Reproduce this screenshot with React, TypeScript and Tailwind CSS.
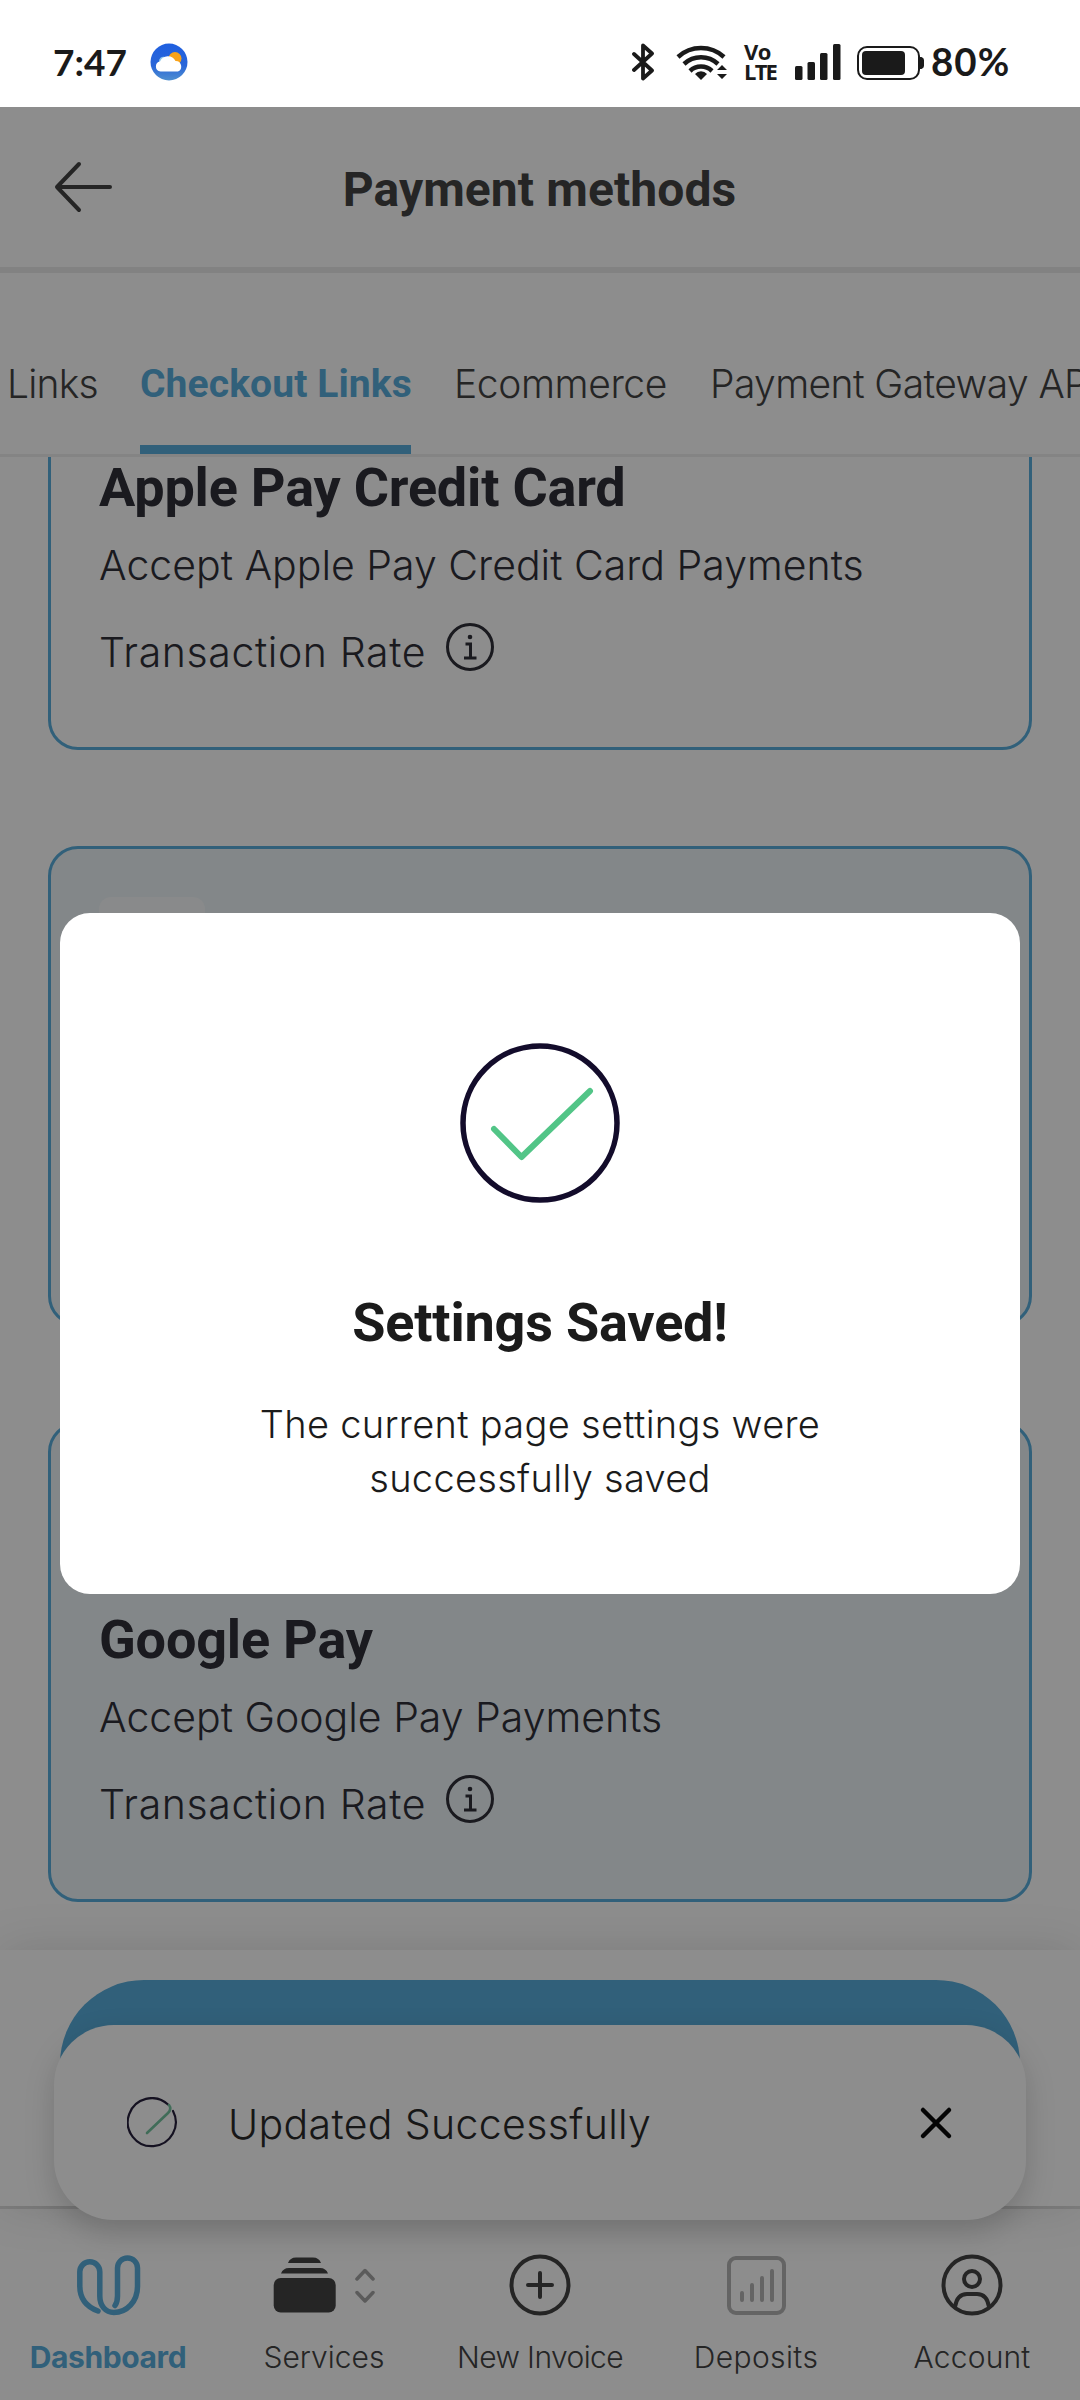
import clsx from 'clsx';

const tabs = [
  { label: 'Links', style: 'w-[90px] tracking-[-0.8px]' },
  { label: 'Checkout Links', style: 'w-[271px] tracking-[0.1px]', active: true },
  { label: 'Ecommerce', style: 'w-[213px] tracking-[-0.4px]' },
  { label: 'Payment Gateway API', style: 'w-[420px] tracking-[-0.6px]' },
];

const methods = [
  {
    name: 'Apple Pay Credit Card',
    description: 'Accept Apple Pay Credit Card Payments',
    filled: false,
  },
  { name: 'Credit Card', description: 'Accept Credit Card Payments', filled: true },
  { name: 'Google Pay', description: 'Accept Google Pay Payments', filled: true },
];

function WeatherIcon() {
  return (
    <svg width="38" height="38" viewBox="0 0 38 38">
      <defs>
        <linearGradient id="sky" x1="0" y1="0" x2="0" y2="1">
          <stop offset="0" stopColor="#1f5fe0" />
          <stop offset="0.6" stopColor="#2a66d8" />
          <stop offset="1" stopColor="#4f8fd0" />
        </linearGradient>
      </defs>
      <circle cx="19" cy="19" r="18.5" fill="url(#sky)" />
      <circle cx="25" cy="15.500" r="6.500" fill="#f9a31a" />
      <path d="M9 19a4.500 4.500 0 0 1 6-5l2 4-5 3z" fill="#8fc7ea" />
      <path d="M10.500 28.500a5 5 0 0 1-.5-9.900a8.500 8.500 0 0 1 15.500-.6a5.500 5.500 0 0 1 2.500 10.500z" fill="#fff" />
    </svg>
  );
}

function StatusBar() {
  return (
    <div className="flex h-[107px] items-center bg-white px-[53px] pt-[17px] font-['Lato','Noto_Sans',sans-serif] text-[#1a1a1a]">
      <span className="w-[97px] pb-0.5 text-[37px] leading-none font-bold">7:47</span>
      <WeatherIcon />
      <svg className="ml-auto" width="96" height="40" viewBox="632 42 96 40" fill="none" stroke="#1a1a1a">
        <path d="M634 54l18 16.500-9 8V45.500l9 8-18 16.500" strokeWidth="3.800" strokeLinejoin="round" strokeLinecap="round" />
        <g strokeWidth="4.500">
          <path d="M678 57a34 34 0 0 1 46 0" />
          <path d="M684 64a25 25 0 0 1 34 0" />
          <path d="M690 71a16 16 0 0 1 22 0" />
        </g>
        <g fill="#1a1a1a" stroke="none">
          <path d="M701 80l-6-6a8 8 0 0 1 12 0z" />
          <path d="M722 65l5 5h-10zM722 79l5-5h-10z" />
        </g>
      </svg>
      <div className="ml-4 flex w-[50px] flex-col pb-0.5 font-['Open_Sans',sans-serif] text-[22px] leading-5 font-bold">
        <span className="tracking-[-0.5px]">Vo</span>
        <span className="tracking-[-1.8px]">LTE</span>
      </div>
      <svg width="130" height="40" viewBox="794 42 130 40" fill="none" stroke="#1a1a1a">
        <g fill="#1a1a1a" stroke="none">
          <rect x="795" y="66" width="7.500" height="14" rx="1.500" />
          <rect x="807.500" y="62" width="7.500" height="18" rx="1.500" />
          <rect x="820" y="53" width="7.500" height="27" rx="1.500" />
          <rect x="833" y="44" width="7.500" height="36" rx="1.500" />
          <rect x="862" y="51" width="43" height="24" rx="4" />
          <path d="M920 57h1.500q2.500 1 2.500 3v6q0 2-2.500 3H920z" />
        </g>
        <rect x="858" y="47" width="61" height="32" rx="9" strokeWidth="2" />
      </svg>
      <span className="ml-[7px] w-[96px] pb-0.5 text-[38.5px] leading-none font-bold tracking-[1px]">80%</span>
    </div>
  );
}

function Header() {
  return (
    <header className="flex h-[166px] items-center border-b-6 border-[#ebebeb] px-[54px]">
      <svg width="60" height="52" viewBox="0 0 60 52" fill="none" stroke="#444" strokeWidth="4" strokeLinecap="round" strokeLinejoin="round">
        <path d="M25 3L3 26l22 23M3 26h53" />
      </svg>
      <h1 className="flex-1 pt-1.5 pr-[61px] text-center font-['Roboto',sans-serif] text-[48px] leading-none font-bold tracking-[0.1px] whitespace-nowrap text-[#444]">
        Payment methods
      </h1>
    </header>
  );
}

function Tabs() {
  return (
    <nav className="flex h-[184px] items-end gap-[43px] overflow-hidden border-b-3 border-[#eee] pl-[7px]">
      {tabs.map((tab) => (
        <div
          key={tab.label}
          className={clsx(
            'h-[95px] shrink-0 text-[39px] whitespace-nowrap',
            tab.style,
            tab.active
              ? "border-b-9 border-[#59aedc] font-['Roboto',sans-serif] leading-[51px] font-bold text-[#59aedc]"
              : 'leading-[49px] font-light text-[#444]'
          )}
        >
          {tab.label}
        </div>
      ))}
    </nav>
  );
}

function InfoIcon() {
  return (
    <svg width="50" height="50" viewBox="0 0 50 50" fill="none" stroke="currentColor" strokeWidth="3">
      <circle cx="25" cy="25" r="22.500" />
      <path d="M20.500 22h5v13.500M19 36h12.500" />
      <circle cx="25" cy="15" r="2.300" fill="currentColor" stroke="none" />
    </svg>
  );
}

function MethodCard({ name, description, filled }: (typeof methods)[number]) {
  return (
    <article
      className={clsx(
        'h-[480px] shrink-0 rounded-[30px] border-3 border-[#59aedc] p-12 text-[#2f2f38]',
        filled ? 'bg-[#edf4f8]' : 'bg-white'
      )}
    >
      <div className="h-[72px] w-[106px] rounded-xl bg-[#f7fafb]" />
      <h2 className="mt-[65px] font-['Roboto',sans-serif] text-[54px] leading-[60px] font-bold tracking-[-0.2px]">{name}</h2>
      <p className="mt-[20px] text-[41px] leading-[54px] font-light whitespace-nowrap">{description}</p>
      <div className="mt-[30px] flex items-end gap-5">
        <span className="w-[326px] text-[41px] leading-[54px] font-light tracking-[0.6px] whitespace-nowrap">Transaction Rate</span>
        <span className="pb-[7px]">
          <InfoIcon />
        </span>
      </div>
    </article>
  );
}

function Toast() {
  return (
    <div className="absolute top-[75px] right-[54px] left-[54px] z-10 flex h-[195px] items-center rounded-[60px] bg-white pr-[73px] pl-[73px] shadow-[0_12px_30px_rgba(0,0,0,0.17)]">
      <svg width="52" height="52" viewBox="0 0 52 52" fill="none" strokeLinecap="round">
        <path d="M41 7.500A24 24 0 1 0 46 14" stroke="#26203c" strokeWidth="2.200" />
        <path d="M20 36l21-20q4-4 1-8" stroke="#74c3a0" strokeWidth="2.600" />
      </svg>
      <span className="ml-[49px] flex-1 pt-1 text-[41px] font-light tracking-[0.35px] text-[#2b2b2b]">Updated Successfully</span>
      <svg width="34" height="34" viewBox="0 0 34 34" stroke="#0a0a0a" strokeWidth="4.500" strokeLinecap="round">
        <path d="M4 4l26 26M30 4L4 30" />
      </svg>
    </div>
  );
}

function DashboardIcon() {
  return (
    <svg width="66" height="62" viewBox="0 0 66 62" fill="none" stroke="#59aedc" strokeWidth="5.500" strokeLinecap="round">
      <path d="M23 57C12 53 4.800 45 4.800 32V17.800a10 10 0 0 1 20 0V42c0 10 6 16.500 14 16.500c13 0 23.700-11 23.700-26V14a10 10 0 0 0-20 0v28q0 6-2.500 9.500" />
    </svg>
  );
}

function ServicesIcon() {
  return (
    <svg width="104" height="62" viewBox="0 0 104 62">
      <g fill="#444">
        <rect x="1.700" y="24" width="62" height="34.500" rx="7" />
        <path d="M9 19.500q2-5.500 8-5.500h31q6 0 8 5.500zM16 9q2-5.500 8-5.500h17q6 0 8 5.500z" />
      </g>
      <path d="M85 25l8-8.500 8 8.500M85 38.500l8 8.500 8-8.500" fill="none" stroke="#a5a5a5" strokeWidth="3.500" strokeLinecap="round" strokeLinejoin="round" />
    </svg>
  );
}

function InvoiceIcon() {
  return (
    <svg width="62" height="62" viewBox="0 0 62 62" fill="none" stroke="#444" strokeWidth="4" strokeLinecap="round">
      <circle cx="31" cy="31" r="28.500" />
      <path d="M31 19v24M19 31h24" />
    </svg>
  );
}

function DepositsIcon() {
  return (
    <svg width="62" height="62" viewBox="0 0 62 62" fill="none" stroke="#b5b5b5" strokeWidth="4" strokeLinecap="round">
      <rect x="4" y="4" width="55" height="55" rx="7" />
      <path d="M17 39v7M27 31v15M37 24v22M47 17v29" />
    </svg>
  );
}

function AccountIcon() {
  return (
    <svg width="62" height="62" viewBox="0 0 62 62" fill="none" stroke="#444" strokeWidth="4">
      <circle cx="31" cy="31" r="28.500" />
      <circle cx="31" cy="25" r="8" />
      <path d="M14 53q2-13 12-13h10q10 0 12 13" />
    </svg>
  );
}

const navItems = [
  { label: 'Dashboard', icon: <DashboardIcon />, style: 'font-bold text-[#59aedc] tracking-[-0.4px]' },
  { label: 'Services', icon: <ServicesIcon />, style: 'font-light text-[#444]' },
  { label: 'New Invoice', icon: <InvoiceIcon />, style: 'font-light text-[#444] tracking-[-0.6px]' },
  { label: 'Deposits', icon: <DepositsIcon />, style: 'font-light text-[#444] tracking-[0.4px]' },
  { label: 'Account', icon: <AccountIcon />, style: 'font-light text-[#444] tracking-[0.2px]' },
];

function BottomNav() {
  return (
    <nav className="grid h-[194px] grid-cols-5 border-t-3 border-[#e4e4e4] bg-white pt-[45px]">
      {navItems.map((item) => (
        <div key={item.label} className="flex flex-col items-center gap-[21px]">
          {item.icon}
          <span className={clsx('text-[30px] leading-[41px] whitespace-nowrap', item.style)}>{item.label}</span>
        </div>
      ))}
    </nav>
  );
}

function SavedDialog() {
  return (
    <div className="absolute inset-0 z-20 bg-black/[0.447]">
      <div
        role="dialog"
        className="mx-[60px] mt-[806px] flex h-[681px] flex-col items-center rounded-[30px] bg-white pt-[129px] text-center text-[#1b1b1b]"
      >
        <svg width="162" height="162" viewBox="0 0 162 162" fill="none">
          <circle cx="81" cy="81" r="77" stroke="#130c2b" strokeWidth="5.500" />
          <path d="M35 87l27.500 28L131 49" stroke="#52c587" strokeWidth="6" strokeLinecap="round" strokeLinejoin="round" />
        </svg>
        <h2 className="mt-[89px] font-['Roboto',sans-serif] text-[54px] leading-[60px] font-bold tracking-[-0.2px]">Settings Saved!</h2>
        <p className="mt-[44px] w-[640px] text-[38px] leading-[54px] font-light tracking-[0.3px]">
          The current page settings were
          <br />
          successfully saved
        </p>
      </div>
    </div>
  );
}

export default function App() {
  return (
    <div className="flex h-[2400px] w-[1080px] flex-col overflow-hidden bg-white font-['Inter','Liberation_Sans',sans-serif]">
      <StatusBar />
      <main className="relative flex min-h-0 flex-1 flex-col">
        <Header />
        <Tabs />
        {/* List is scrolled, so the last card is anchored to the bottom of the viewport */}
        <section className="flex h-[1493px] flex-col justify-end gap-24 overflow-hidden px-12 pb-12">
          {methods.map((method) => (
            <MethodCard key={method.name} {...method} />
          ))}
        </section>
        <div className="relative h-[256px] bg-white px-[60px] pt-[30px] shadow-[0_0_48px_rgba(0,0,0,0.12)]">
          <button className="block h-[168px] w-full rounded-full bg-[#59aedc]" />
          <Toast />
        </div>
        <BottomNav />
        <SavedDialog />
      </main>
    </div>
  );
}
